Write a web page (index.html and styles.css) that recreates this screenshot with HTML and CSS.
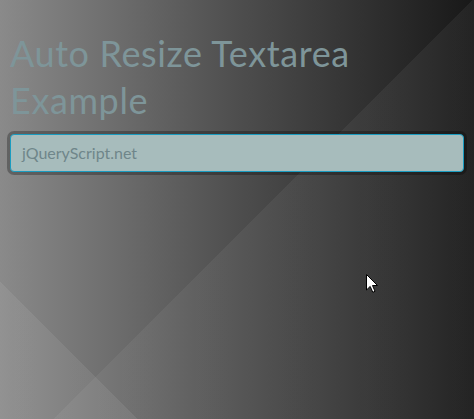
FILE: index.html
```html
<!DOCTYPE html>
<html lang="en">
<head>
  <meta charset="UTF-8" />
  <meta name="viewport" content="width=device-width, initial-scale=1.0" />
  <title>Auto Resize Textarea Example</title>
  <link rel="stylesheet" href="styles.css">
</head>
<body>
  <div class="container">
    <h1 class="title">Auto Resize Textarea Example</h1>
    <textarea class="auto-resize" rows="1" placeholder="jQueryScript.net"></textarea>
  </div>

  <!-- mouse pointer captured in the screenshot -->
  <svg class="pointer" width="13" height="20" viewBox="0 0 13 20">
    <path d="M0.5 0.5 L0.5 16 L4.2 12.4 L6.8 18.3 L9 17.3 L6.5 11.5 L11.5 11.5 Z" fill="#fff" stroke="#000" stroke-width="1" />
  </svg>
</body>
</html>
```

FILE: styles.css
```css
html, body {
  margin: 0;
  padding: 0;
  height: 100%;
}

*, *::before, *::after {
  box-sizing: border-box;
}

body {
  position: relative;
  overflow: hidden;
  font-family: 'Lato', 'Open Sans', sans-serif;
  background:
    linear-gradient(45deg, rgba(255, 255, 255, 0.07) 97px, transparent 97px),
    linear-gradient(135deg, transparent 334px, rgba(255, 255, 255, 0.05) 334px),
    linear-gradient(to right, #8a8a8a, #4e4e4e 50%, #181818);
}

.container {
  padding: 30px 10px 0;
}

.title {
  margin: 0 0 10px;
  font-size: 36px;
  font-weight: 400;
  letter-spacing: 0.6px;
  line-height: 47px;
  color: #7e9599;
}

.auto-resize {
  display: block;
  width: 100%;
  height: 38px;
  margin: 0;
  padding: 8px 11px;
  font-family: inherit;
  font-size: 16px;
  line-height: 20px;
  color: #4f6468;
  background: #a7bcbc;
  border: 1px solid #1a9cc0;
  border-radius: 4px;
  box-shadow: 0 0 0 3px rgba(0, 0, 0, 0.28);
  resize: none;
  outline: none;
}

.auto-resize::placeholder {
  color: #6f868a;
}

.pointer {
  position: absolute;
  left: 366px;
  top: 274px;
}
```
